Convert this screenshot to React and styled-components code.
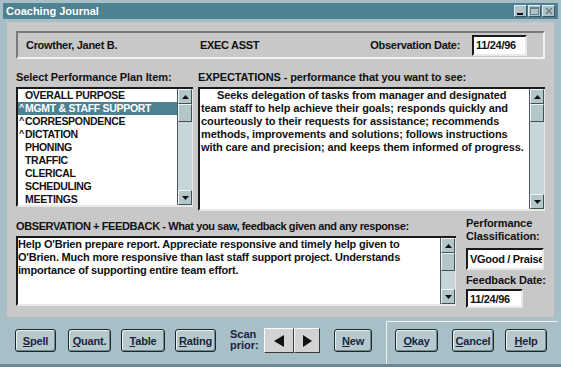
import styled, { createGlobalStyle } from "styled-components"

const GlobalStyle = createGlobalStyle`
  html, body { margin:0; padding:0; background:#a8bfc7; }
  body { font-family:"Liberation Sans", Arial, sans-serif; }
  * { box-sizing:border-box; }
`

const Window = styled.div`
  width:561px;
  height:367px;
  background:#a8bfc7;
  padding:3px 3px 0 3px;
  display:flex;
  flex-direction:column;
  border-bottom:3px solid #6f8890;
`

const TitleBar = styled.div`
  height:16px;
  background:#4e8191;
  color:#fff;
  font-weight:bold;
  font-size:11px;
  display:flex;
  align-items:center;
  justify-content:space-between;
  padding:0 3px 0 3px;
`

const WinButtons = styled.div`
  display:flex;
  gap:1px;
`

const WinBtn = styled.div`
  width:13px;
  height:12px;
  background:#aec4ca;
  border:1px solid;
  border-color:#e4eef0 #3c5258 #3c5258 #e4eef0;
  display:flex;
  align-items:center;
  justify-content:center;
`

const Panel = styled.div`
  margin:3px 4px 0 4px;
  height:295px;
  background:#c8c8c8;
  padding:9px 9px 0 9px;
  display:flex;
  flex-direction:column;
`

const HeaderBox = styled.div`
  height:28px;
  border:2px solid;
  border-color:#7a7a7a #f2f2f2 #f2f2f2 #7a7a7a;
  display:flex;
  align-items:center;
  padding:0 16px 0 8px;
  font-size:11px;
  font-weight:bold;
  letter-spacing:-0.3px;
  color:#111;
`

const Name = styled.span`
  width:174px;
`

const Grow = styled.span`
  flex:1;
`

const Field = styled.div`
  width:${p => p.$w}px;
  height:${p => p.$h}px;
  background:#fff;
  border:2px solid;
  border-color:#1a1a1a #e8e8e8 #e8e8e8 #1a1a1a;
  font-size:11px;
  font-weight:bold;
  color:#111;
  padding:0 2px;
  display:flex;
  align-items:center;
  white-space:nowrap;
  overflow:hidden;
  letter-spacing:-0.3px;
  margin-left:${p => p.$ml || 0}px;
`

const Upper = styled.div`
  display:grid;
  grid-template-columns:177px 347px;
  column-gap:5px;
  margin-top:12px;
`

const Lower = styled.div`
  display:grid;
  grid-template-columns:440px 79px;
  column-gap:10px;
  margin-top:9px;
`

const Col = styled.div`
  display:flex;
  flex-direction:column;
`

const Label = styled.div`
  font-size:11px;
  font-weight:bold;
  color:#111;
  line-height:${p => p.$lh || 13}px;
  height:${p => p.$h || 16}px;
  white-space:nowrap;
  letter-spacing:${p => p.$ls || "-0.1px"};
`

const Box = styled.div`
  height:${p => p.$h}px;
  background:#fff;
  border:2px solid;
  border-color:#1a1a1a #e8e8e8 #e8e8e8 #1a1a1a;
  border-right:none;
  display:flex;
`

const BoxBody = styled.div`
  flex:1;
  overflow:hidden;
  font-size:11px;
  font-weight:bold;
  color:#111;
  line-height:13px;
  padding:${p => p.$pad || "0"};
`

const Line = styled.div`
  white-space:nowrap;
  padding-left:${p => p.$indent || 0}px;
  letter-spacing:${p => p.$ls || "0"};
`

const ListRow = styled.div`
  height:13px;
  line-height:13px;
  font-size:10.5px;
  letter-spacing:-0.3px;
  font-weight:bold;
  display:flex;
  background:${p => (p.$sel ? "#4e8191" : "transparent")};
  color:${p => (p.$sel ? "#fff" : "#111")};
`

const Mark = styled.span`
  width:7px;
  flex:none;
  padding-left:1px;
  font-size:9px;
  line-height:10px;
`

const ScrollBar = styled.div`
  width:16px;
  display:flex;
  flex-direction:column;
  background:#c6d6da;
  border-left:1px solid #4a5a60;
  border-right:1px solid #e8e8e8;
`

const ScrollBtn = styled.div`
  height:${p => p.$h || 15}px;
  background:#b3c7cb;
  border:1px solid;
  border-color:#eef4f5 #3f5258 #3f5258 #eef4f5;
  display:flex;
  align-items:center;
  justify-content:center;
`

const Track = styled.div`
  flex:1;
`

const RightCol = styled.div`
  display:flex;
  flex-direction:column;
  margin-top:-3px;
`

const Footer = styled.div`
  flex:1;
  display:flex;
`

const LeftTools = styled.div`
  display:flex;
  align-items:flex-start;
  padding:12px 0 0 12px;
  width:383px;
`

const Btn = styled.button`
  width:${p => p.$w}px;
  height:23px;
  margin-left:${p => p.$ml || 0}px;
  border:1px solid #1c262b;
  border-radius:3px;
  background:#b6cace;
  box-shadow:inset 1px 1px 0 #e8f0f2, inset -1px -1px 0 #6e8a92;
  font-family:"Liberation Sans", Arial, sans-serif;
  font-size:11px;
  font-weight:bold;
  color:#1c2240;
  padding:0;
  letter-spacing:-0.2px;
  u { text-decoration:underline; }
`

const ScanLabel = styled.div`
  margin-left:14px;
  font-size:11px;
  font-weight:bold;
  line-height:11px;
  color:#1c2240;
  width:34px;
`

const ArrowBtn = styled.button`
  width:${p => p.$w}px;
  height:25px;
  margin-top:-1px;
  background:#d2d2d2;
  border:1px solid;
  border-color:#fafafa #3a3a3a #3a3a3a #fafafa;
  padding:0;
  display:flex;
  align-items:center;
  justify-content:center;
`

const OkPanel = styled.div`
  flex:1;
  margin-top:4px;
  border-top:1px solid #eef4f5;
  border-left:1px solid #eef4f5;
  display:flex;
  align-items:flex-start;
  padding:7px 0 0 8px;
`

const Tri = ({ dir = "up" }) => {
  const pts = {
    up: "0,5 3.5,1 7,5",
    down: "0,1 3.5,5 7,1",
  }[dir]
  return (
    <svg width="7" height="6" viewBox="0 0 7 6">
      <polygon points={pts} fill="#111" />
    </svg>
  )
}

const Scroll = () => (
  <ScrollBar>
    <ScrollBtn><Tri dir="up" /></ScrollBtn>
    <ScrollBtn $h={18} />
    <Track />
    <ScrollBtn><Tri dir="down" /></ScrollBtn>
  </ScrollBar>
)

const items = [
  ["", "OVERALL PURPOSE"],
  ["^", "MGMT & STAFF SUPPORT", true],
  ["^", "CORRESPONDENCE"],
  ["^", "DICTATION"],
  ["", "PHONING"],
  ["", "TRAFFIC"],
  ["", "CLERICAL"],
  ["", "SCHEDULING"],
  ["", "MEETINGS"],
]

const expectations = [
  "Seeks delegation of tasks from manager and designated",
  "team staff to help achieve their goals; responds quickly and",
  "courteously to their requests for assistance; recommends",
  "methods, improvements and solutions; follows instructions",
  "with care and precision; and keeps them informed of progress.",
]

const observation = [
  "Help O'Brien prepare report. Appreciate responsive and timely help given to",
  "O'Brien. Much more responsive than last staff support project. Understands",
  "importance of supporting entire team effort.",
]

const App = () => {
  return (
    <>
      <GlobalStyle />
      <Window>
        <TitleBar>
          <span>Coaching Journal</span>
          <WinButtons>
            <WinBtn>
              <svg width="7" height="8" viewBox="0 0 7 8"><rect x="0" y="6" width="6" height="2" fill="#111" /></svg>
            </WinBtn>
            <WinBtn>
              <svg width="9" height="8" viewBox="0 0 9 8"><rect x="0.5" y="0.5" width="8" height="7" fill="none" stroke="#6a7e84" /><rect x="0.5" y="0.5" width="8" height="1.5" fill="#6a7e84" /></svg>
            </WinBtn>
            <WinBtn>
              <svg width="8" height="8" viewBox="0 0 8 8"><path d="M1 1 L7 7 M7 1 L1 7" stroke="#6a7e84" strokeWidth="1.5" /></svg>
            </WinBtn>
          </WinButtons>
        </TitleBar>

        <Panel>
          <HeaderBox>
            <Name>Crowther, Janet B.</Name>
            <Grow>EXEC ASST</Grow>
            <span>Observation Date:</span>
            <Field $w={55} $h={21} $ml={12}>11/24/96</Field>
          </HeaderBox>

          <Upper>
            <Col>
              <Label>Select Performance Plan Item:</Label>
              <Box $h={120}>
                <BoxBody>
                  {items.map(([m, t, sel]) => (
                    <ListRow key={t} $sel={sel}>
                      <Mark>{m}</Mark>
                      {t}
                    </ListRow>
                  ))}
                </BoxBody>
                <Scroll />
              </Box>
            </Col>
            <Col>
              <Label>EXPECTATIONS - performance that you want to see:</Label>
              <Box $h={124}>
                <BoxBody $pad="0 0 0 1px">
                  {expectations.map((l, i) => (
                    <Line key={i} $indent={i === 0 ? 16 : 0} $ls="-0.1px">{l}</Line>
                  ))}
                </BoxBody>
                <Scroll />
              </Box>
            </Col>
          </Upper>

          <Lower>
            <Col>
              <Label $ls="-0.4px">OBSERVATION + FEEDBACK - What you saw, feedback given and any response:</Label>
              <Box $h={70}>
                <BoxBody>
                  {observation.map((l, i) => (
                    <Line key={i} $ls="-0.2px">{l}</Line>
                  ))}
                </BoxBody>
                <Scroll />
              </Box>
            </Col>
            <RightCol>
              <Label $h={13}>Performance</Label>
              <Label $h={18}>Classification:</Label>
              <Field $w={78} $h={22}>VGood / Praise</Field>
              <Label $h={19} $lh={20}>Feedback Date:</Label>
              <Field $w={57} $h={19}>11/24/96</Field>
            </RightCol>
          </Lower>
        </Panel>

        <Footer>
          <LeftTools>
            <Btn $w={41}><u>S</u>pell</Btn>
            <Btn $w={43} $ml={12}><u>Q</u>uant.</Btn>
            <Btn $w={44} $ml={10}><u>T</u>able</Btn>
            <Btn $w={41} $ml={10}><u>R</u>ating</Btn>
            <ScanLabel>Scan prior:</ScanLabel>
            <ArrowBtn $w={30}>
              <svg width="10" height="12" viewBox="0 0 10 12"><polygon points="10,0 0,6 10,12" fill="#111" /></svg>
            </ArrowBtn>
            <ArrowBtn $w={26}>
              <svg width="9" height="12" viewBox="0 0 9 12"><polygon points="0,0 9,6 0,12" fill="#111" /></svg>
            </ArrowBtn>
            <Btn $w={38} $ml={14}><u>N</u>ew</Btn>
          </LeftTools>
          <OkPanel>
            <Btn $w={43}><u>O</u>kay</Btn>
            <Btn $w={42} $ml={14}><u>C</u>ancel</Btn>
            <Btn $w={42} $ml={11}><u>H</u>elp</Btn>
          </OkPanel>
        </Footer>
      </Window>
    </>
  )
}

export default App
